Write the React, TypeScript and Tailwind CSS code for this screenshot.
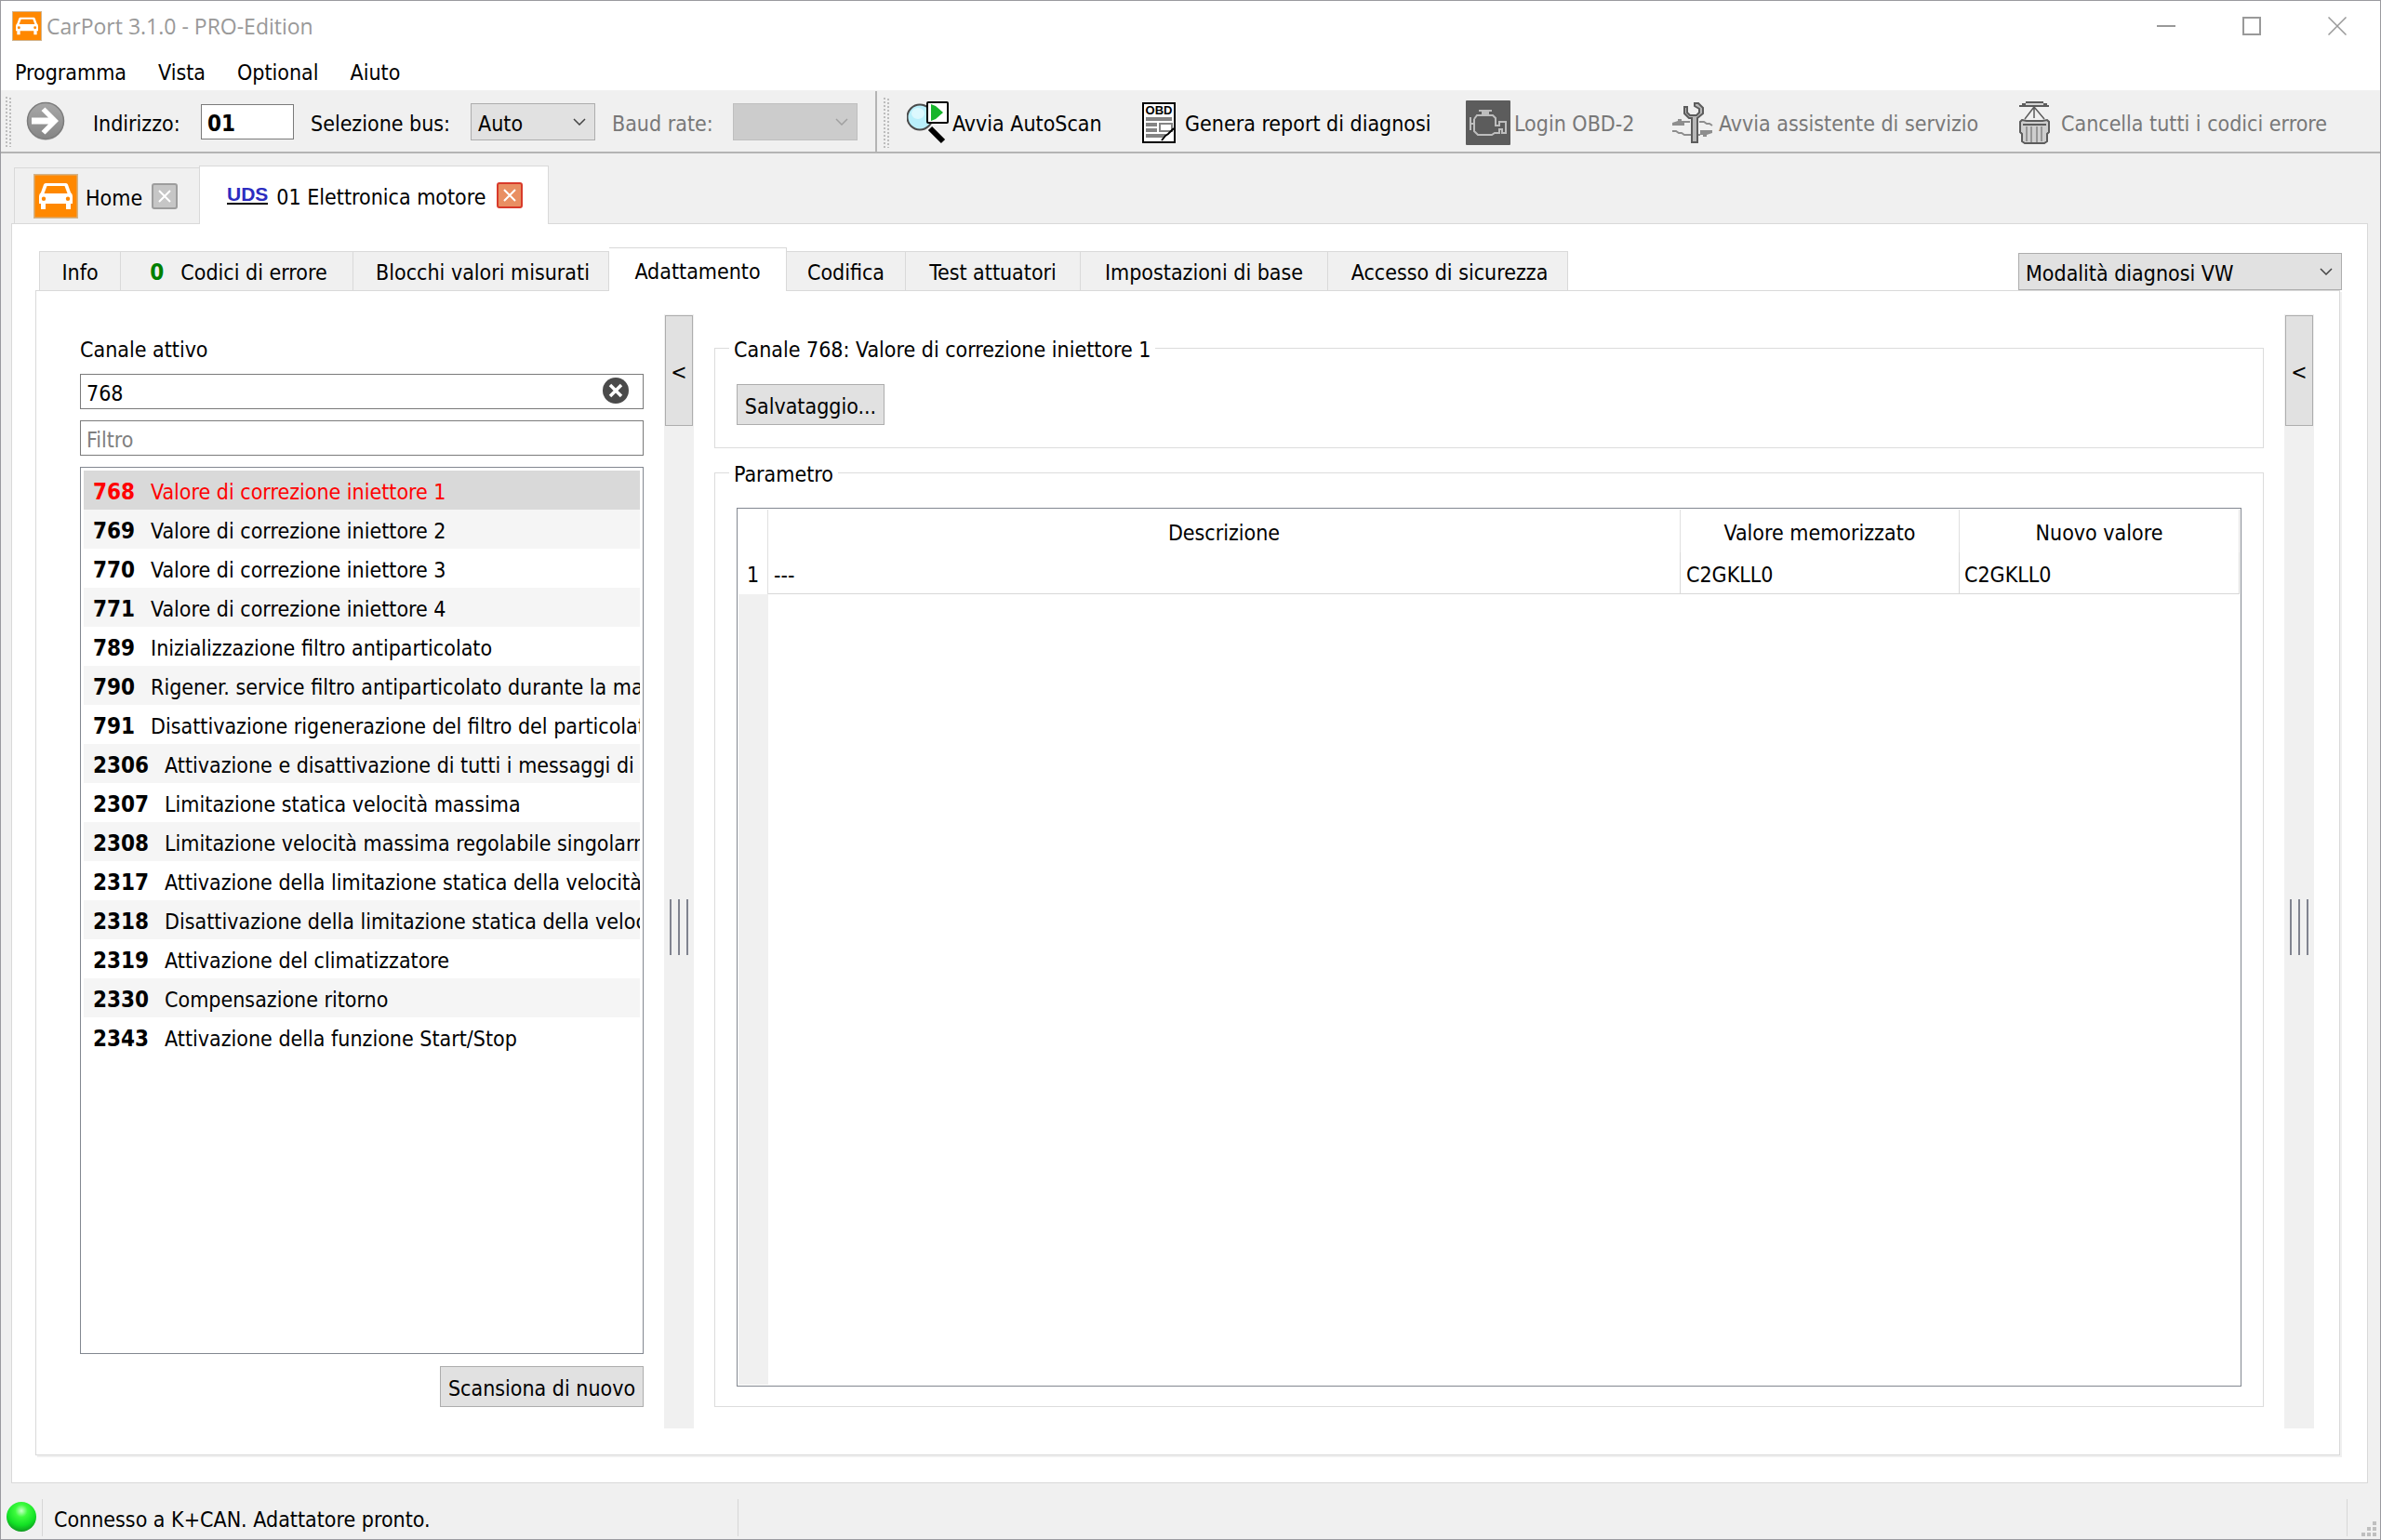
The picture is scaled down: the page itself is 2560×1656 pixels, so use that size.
import { useState, type ReactNode } from "react";

const FONT = "font-['DejaVu_Sans_Condensed','DejaVu_Sans',sans-serif]";

type Channel = { id: string; name: string };

const CHANNELS: Channel[] = [
  { id: "768", name: "Valore di correzione iniettore 1" },
  { id: "769", name: "Valore di correzione iniettore 2" },
  { id: "770", name: "Valore di correzione iniettore 3" },
  { id: "771", name: "Valore di correzione iniettore 4" },
  { id: "789", name: "Inizializzazione filtro antiparticolato" },
  { id: "790", name: "Rigener. service filtro antiparticolato durante la marcia" },
  { id: "791", name: "Disattivazione rigenerazione del filtro del particolato" },
  { id: "2306", name: "Attivazione e disattivazione di tutti i messaggi di errore" },
  { id: "2307", name: "Limitazione statica velocità massima" },
  { id: "2308", name: "Limitazione velocità massima regolabile singolarmente" },
  { id: "2317", name: "Attivazione della limitazione statica della velocità" },
  { id: "2318", name: "Disattivazione della limitazione statica della velocità" },
  { id: "2319", name: "Attivazione del climatizzatore" },
  { id: "2330", name: "Compensazione ritorno" },
  { id: "2343", name: "Attivazione della funzione Start/Stop" },
];

function CarIcon({ className }: { className: string }) {
  return (
    <svg viewBox="0 0 48 48" className={className} aria-hidden="true">
      <rect x="0.75" y="0.75" width="46.5" height="46.5" fill="#ff8800" stroke="#d2b48c" strokeWidth="1.5" />
      <path
        fill="#fff"
        fillRule="evenodd"
        d="M13 10H35Q36.500 10 37 11.500L40 20Q42 21.500 42 24V32H40V38H35V32H13V38H8V32H6V24Q6 21.500 8 20L11 11.500Q11.500 10 13 10ZM14.500 13L11.500 21H36.500L33.500 13ZM11 24.500A2.200 2.200 0 1 0 11 28.900A2.200 2.200 0 1 0 11 24.500ZM37 24.500A2.200 2.200 0 1 0 37 28.900A2.200 2.200 0 1 0 37 24.500Z"
      />
    </svg>
  );
}

function ArrowIcon() {
  return (
    <svg viewBox="0 0 42 44" className="h-[44px] w-[42px]" aria-hidden="true">
      <defs>
        <linearGradient id="arrowFill" x1="0" y1="0" x2="0" y2="1">
          <stop offset="0" stopColor="#a8a8a8" />
          <stop offset="1" stopColor="#858585" />
        </linearGradient>
      </defs>
      <circle cx="21" cy="22.500" r="19.500" fill="#cfcfcf" />
      <circle cx="21" cy="21" r="19.500" fill="url(#arrowFill)" stroke="#7c7c7c" strokeWidth="1.500" />
      <path d="M6 17.500H24L16.500 10L20.500 6.500L35 21L20.500 35.500L16.500 32L24 24.500H6Z" fill="#fff" />
    </svg>
  );
}

function AutoScanIcon() {
  return (
    <svg viewBox="0 0 46 46" className="h-[46px] w-[46px]" aria-hidden="true">
      <path d="M25 29L39 43" stroke="#000" strokeWidth="6" />
      <circle cx="14" cy="17" r="13.500" fill="#b9effb" stroke="#4a4a4a" strokeWidth="2" />
      <ellipse cx="12" cy="13" rx="7" ry="6" fill="#dcf8fe" />
      <rect x="22" y="1" width="22" height="22" rx="1" fill="#fff" stroke="#000" strokeWidth="2" />
      <path d="M26 3L31 5L39 12L31 19L26 21Z" fill="#17b52b" />
    </svg>
  );
}

function ReportIcon() {
  return (
    <svg viewBox="0 0 36 44" className="h-[44px] w-[36px]" aria-hidden="true">
      <rect x="1" y="1" width="34" height="42" fill="#fff" stroke="#000" strokeWidth="2" />
      <text x="18" y="13" textAnchor="middle" fontFamily="Liberation Sans" fontWeight="700" fontSize="13" fill="#000">
        OBD
      </text>
      <path d="M4 16H32V20H4ZM4 22H16V26H4ZM4 28H16V32H4ZM4 34H26L22 38H4Z" fill="#848484" />
      <rect x="19" y="23" width="13" height="8" fill="#fff" stroke="#848484" strokeWidth="2" />
      <path d="M34 28L28 34L25 36L21 41" fill="none" stroke="#000" strokeWidth="2" />
    </svg>
  );
}

function EngineIcon() {
  return (
    <svg viewBox="0 0 48 48" className="h-[48px] w-[48px]" aria-hidden="true">
      <rect width="48" height="48" rx="1" fill="#5c5c5c" />
      <path
        d="M14 11H28M5 18V32M5 25H9M9 20L12 16H29L32 19V27H36V23H43V35H39V31H36V35H31L28 37H13L9 33V20"
        fill="none"
        stroke="#bdbdbd"
        strokeWidth="2"
      />
      <path d="M17 11H25V15H17Z" fill="#bdbdbd" />
    </svg>
  );
}

function ServiceIcon() {
  return (
    <svg viewBox="0 0 46 44" className="h-[44px] w-[46px]" aria-hidden="true">
      <path
        d="M12 21H20M30 21H35L38 23H41L44 25M1 31H5L8 33H11L14 35H31"
        fill="none"
        stroke="#8e8e8e"
        strokeWidth="2"
      />
      <path d="M1 22L7 20V18H11V20H14V25H1ZM44 30V33L38 35V37H34V35H31V30Z" fill="#8e8e8e" />
      <path
        d="M14 5H17V11L20 14H27L30 11V7L25 4V1H29L34 6V12L28 17V43H22V17H19L14 12Z"
        fill="#b8b8b8"
        stroke="#5c5c5c"
        strokeWidth="2"
      />
    </svg>
  );
}

function TrashIcon() {
  return (
    <svg viewBox="0 0 34 46" className="h-[46px] w-[34px]" aria-hidden="true">
      <path d="M7 1H26L30 5H3Z" fill="#d6d6d6" />
      <path d="M7 1H26M3 3H7M26 3H30M0 5H32" fill="none" stroke="#5c5c5c" strokeWidth="2" />
      <path d="M16 6L6 19M16 6L27 19M16 6V18" fill="none" stroke="#5c5c5c" strokeWidth="1.500" />
      <path d="M3 20L8 21H25L30 20L32 22V33L30 35V43L27 45H6L3 43V35L1 33V22Z" fill="#cecece" stroke="#5c5c5c" strokeWidth="2" />
      <path d="M4 25H29" stroke="#5c5c5c" strokeWidth="2" />
      <path d="M8 27V43M13 27V44M19 27V44M24 27V43" stroke="#969696" strokeWidth="2" />
    </svg>
  );
}

function Chevron({ color }: { color: string }) {
  return (
    <svg viewBox="0 0 14 8" className="pointer-events-none absolute top-[16px] right-[10px] h-[8px] w-[14px]" aria-hidden="true">
      <path d="M1 1L7 7L13 1" fill="none" stroke={color} strokeWidth="1.500" />
    </svg>
  );
}

function ToolbarGrip() {
  return (
    <svg viewBox="0 0 6 54" className="h-[54px] w-[6px] shrink-0" aria-hidden="true">
      <path d="M1 0V54M5 1V54" stroke="#bdbdbd" strokeWidth="2" strokeDasharray="2 2" />
    </svg>
  );
}

function ToolButton({
  icon,
  label,
  className,
  disabled = false,
}: {
  icon: ReactNode;
  label: string;
  className: string;
  disabled?: boolean;
}) {
  return (
    <button type="button" disabled={disabled} className={`flex shrink-0 items-center whitespace-nowrap disabled:text-[#787878] ${className}`}>
      {icon}
      <span className="pt-[3px]">{label}</span>
    </button>
  );
}

function InnerTab({ label, className, count }: { label: string; className: string; count?: string }) {
  return (
    <button
      type="button"
      role="tab"
      aria-selected="false"
      className={`flex h-[42px] shrink-0 items-center justify-center whitespace-nowrap border-t border-r border-[#d9d9d9] bg-[#f0f0f0] pt-[3px] ${className}`}
    >
      {count && <b className="mr-[18px] text-[24px] text-[#008000]">{count}</b>}
      {label}
    </button>
  );
}

function Splitter({ label }: { label: string }) {
  return (
    <div className="flex w-8 shrink-0 flex-col items-center bg-[#f0f0f0]">
      <button type="button" aria-label={label} className="mt-px h-[119px] w-[30px] border border-[#adadad] bg-[#e1e1e1] pt-[3px]">
        &lt;
      </button>
      <div className="flex flex-1 items-center gap-[7px]">
        <span className="h-[60px] w-[2px] bg-[#80838f]" />
        <span className="h-[60px] w-[2px] bg-[#80838f]" />
        <span className="h-[60px] w-[2px] bg-[#80838f]" />
      </div>
    </div>
  );
}

function TitleBar() {
  return (
    <header className="flex h-[54px] items-center bg-white pl-3">
      <CarIcon className="h-[32px] w-[32px]" />
      <h1 className="ml-[5px] flex-1 font-['Open_Sans',sans-serif] text-[23px] text-[#999999]">CarPort 3.1.0 - PRO-Edition</h1>
      <div className="flex h-full text-[#999999]">
        <button type="button" aria-label="Riduci a icona" className="grid w-[92px] place-items-center">
          <svg viewBox="0 0 20 20" className="size-5">
            <path d="M0 10H20" stroke="currentColor" strokeWidth="2" />
          </svg>
        </button>
        <button type="button" aria-label="Ingrandisci" className="grid w-[92px] place-items-center">
          <svg viewBox="0 0 20 20" className="size-5">
            <rect x="1" y="1" width="18" height="18" fill="none" stroke="currentColor" strokeWidth="2" />
          </svg>
        </button>
        <button type="button" aria-label="Chiudi" className="grid w-[92px] place-items-center">
          <svg viewBox="0 0 20 20" className="size-5">
            <path d="M0.500 0.500L19.500 19.500M19.500 0.500L0.500 19.500" stroke="currentColor" strokeWidth="1.500" />
          </svg>
        </button>
      </div>
    </header>
  );
}

function Toolbar() {
  const [address, setAddress] = useState("01");
  return (
    <div className="flex h-[67px] border-b-2 border-[#b4b4b4]">
      <div className="flex w-[942px] shrink-0 items-center border-r-2 border-[#b4b4b4] pl-[5px]">
        <ToolbarGrip />
        <button type="button" aria-label="Connetti" className="ml-[16px]">
          <ArrowIcon />
        </button>
        <label htmlFor="address" className="ml-[30px] w-[116px] pt-[4px]">
          Indirizzo:
        </label>
        <input
          id="address"
          value={address}
          onChange={(e) => setAddress(e.target.value)}
          className="h-[38px] w-[100px] border border-[#7a7a7a] bg-white px-[6px] pt-[4px] text-[24px] font-bold outline-none"
        />
        <label htmlFor="bus" className="ml-[18px] w-[172px] pt-[4px]">
          Selezione bus:
        </label>
        <div className="relative">
          <select id="bus" className="h-[40px] w-[134px] appearance-none border border-[#adadad] bg-[#e1e1e1] pt-[4px] pl-[7px]">
            <option>Auto</option>
          </select>
          <Chevron color="#444" />
        </div>
        <label htmlFor="baud" className="ml-[18px] w-[130px] pt-[4px] text-[#787878]">
          Baud rate:
        </label>
        <div className="relative">
          <select id="baud" disabled className="h-[40px] w-[134px] appearance-none border border-[#bfbfbf] bg-[#cccccc] opacity-100" />
          <Chevron color="#a0a0a0" />
        </div>
      </div>
      <div className="flex flex-1 items-center pt-[2px] pl-[7px]">
        <ToolbarGrip />
        <ToolButton icon={<AutoScanIcon />} label="Avvia AutoScan" className="ml-[19px] w-[253px] gap-[3px]" />
        <ToolButton icon={<ReportIcon />} label="Genera report di diagnosi" className="w-[348px] gap-[10px]" />
        <ToolButton icon={<EngineIcon />} label="Login OBD-2" className="w-[221px] gap-[4px]" disabled />
        <ToolButton icon={<ServiceIcon />} label="Avvia assistente di servizio" className="w-[374px] gap-[5px]" disabled />
        <ToolButton icon={<TrashIcon />} label="Cancella tutti i codici errore" className="gap-[11px]" disabled />
      </div>
    </div>
  );
}

function CloseGlyph() {
  return (
    <svg viewBox="0 0 16 16" className="size-4" aria-hidden="true">
      <path d="M2 2L14 14M14 2L2 14" stroke="#fff" strokeWidth="2" />
    </svg>
  );
}

function SessionTabs() {
  return (
    <div role="tablist" className="flex h-[75px] items-end pl-[3px]">
      <div className="flex h-[60px] w-[199px] items-center border-t border-l border-[#d9d9d9] pl-[20px]">
        <button type="button" role="tab" aria-selected="false" className="flex items-center gap-[8px]">
          <CarIcon className="h-[48px] w-[48px]" />
          <span className="pt-[4px]">Home</span>
        </button>
        <button
          type="button"
          aria-label="Chiudi Home"
          className="ml-[10px] grid size-[28px] place-items-center rounded-[3px] border-2 border-[#9d9d9d] bg-[#c6c6c6]"
        >
          <CloseGlyph />
        </button>
      </div>
      <div className="relative -mb-px flex h-[63px] w-[376px] items-center border-x border-t border-[#d9d9d9] bg-white pl-[29px]">
        <button type="button" role="tab" aria-selected="true" className="flex items-center gap-[9px]">
          <b className="border-b-2 border-black font-['Liberation_Sans',sans-serif] text-[21px] leading-[18px] text-[#2c2cc0]">UDS</b>
          <span className="pt-[3px]">01 Elettronica motore</span>
        </button>
        <button
          type="button"
          aria-label="Chiudi 01 Elettronica motore"
          className="ml-[12px] grid size-[28px] place-items-center rounded-[3px] border-2 border-[#d83a2a] bg-[#e98f62]"
        >
          <CloseGlyph />
        </button>
      </div>
    </div>
  );
}

function ChannelPanel() {
  const [channel, setChannel] = useState("768");
  const [filter, setFilter] = useState("");
  const selected = "768";
  const rows = CHANNELS.filter((c) => `${c.id} ${c.name}`.toLowerCase().includes(filter.toLowerCase()));
  return (
    <section className="mr-[22px] flex w-[606px] shrink-0 flex-col pt-6 pb-[23px]">
      <label htmlFor="channel">Canale attivo</label>
      <div className="relative mt-3">
        <input
          id="channel"
          value={channel}
          onChange={(e) => setChannel(e.target.value)}
          className="h-[38px] w-full border border-[#7a7a7a] px-[6px] pt-[4px] outline-none"
        />
        <button type="button" aria-label="Cancella" onClick={() => setChannel("")} className="absolute top-[4px] right-[16px]">
          <svg viewBox="0 0 28 28" className="size-7" aria-hidden="true">
            <circle cx="14" cy="14" r="14" fill="#4a4a4a" />
            <path d="M8 8L20 20M20 8L8 20" stroke="#fff" strokeWidth="3.500" />
          </svg>
        </button>
      </div>
      <input
        aria-label="Filtro"
        placeholder="Filtro"
        value={filter}
        onChange={(e) => setFilter(e.target.value)}
        className="mt-3 h-[38px] w-full border border-[#7a7a7a] px-[6px] pt-[4px] outline-none placeholder:text-[#808080]"
      />
      <ul className="mt-3 flex-1 overflow-hidden border border-[#828790] p-[3px]">
        {rows.map((c, i) => (
          <li key={c.id} className={c.id === selected ? "bg-[#d9d9d9] text-[#ff0000]" : i % 2 === 1 ? "bg-[#f5f5f5]" : "bg-white"}>
            <button
              type="button"
              onClick={() => setChannel(c.id)}
              className="flex h-[42px] w-full items-center gap-[17px] overflow-hidden pt-[3px] pl-[10px] text-left whitespace-nowrap"
            >
              <b className="text-[24px]">{c.id}</b>
              <span>{c.name}</span>
            </button>
          </li>
        ))}
      </ul>
      <button type="button" className="mt-[13px] h-[44px] w-[219px] self-end whitespace-nowrap border border-[#adadad] bg-[#e1e1e1] pt-[3px]">
        Scansiona di nuovo
      </button>
    </section>
  );
}

function AdaptationPanel() {
  return (
    <section className="mx-[22px] flex min-w-0 flex-1 flex-col pt-[20px] pb-[23px]">
      <fieldset className="border border-[#dcdcdc] px-[23px] pt-[23px] pb-6">
        <legend className="-ml-2 px-[5px] pt-1">Canale 768: Valore di correzione iniettore 1</legend>
        <button type="button" className="block h-[44px] w-[159px] border border-[#adadad] bg-[#e1e1e1] pt-[3px]">
          Salvataggio...
        </button>
      </fieldset>
      <fieldset className="mt-[10px] flex min-w-0 flex-1 flex-col border border-[#dcdcdc] px-[23px] pt-[22px] pb-[21px]">
        <legend className="-ml-2 px-[5px] pt-1">Parametro</legend>
        <div className="flex flex-1 flex-col border border-[#828790] p-px">
          <table className="w-full table-fixed border-separate border-spacing-0">
            <colgroup>
              <col className="w-[32px]" />
              <col />
              <col className="w-[300px]" />
              <col className="w-[301px]" />
            </colgroup>
            <thead>
              <tr className="h-[46px]">
                <td className="border-r border-[#e0e0e0]" />
                <th scope="col" className="border-r border-[#e0e0e0] pt-[3px] font-normal">
                  Descrizione
                </th>
                <th scope="col" className="border-r border-[#e0e0e0] pt-[3px] font-normal">
                  Valore memorizzato
                </th>
                <th scope="col" className="border-r border-[#e0e0e0] pt-[3px] font-normal">
                  Nuovo valore
                </th>
              </tr>
            </thead>
            <tbody>
              <tr className="h-[45px]">
                <th scope="row" className="border-r border-[#e0e0e0] pt-[3px] font-normal">
                  1
                </th>
                <td className="border-r border-b border-[#d8d8d8] pt-[3px] pl-[6px]">---</td>
                <td className="border-r border-b border-[#d8d8d8] pt-[3px] pl-[6px]">C2GKLL0</td>
                <td className="border-r border-b border-[#d8d8d8] pt-[3px] pl-[5px]">C2GKLL0</td>
              </tr>
            </tbody>
          </table>
          <div className="w-[32px] flex-1 bg-[#f0f0f0]" />
        </div>
      </fieldset>
    </section>
  );
}

export default function App() {
  return (
    <div className={`flex min-h-screen flex-col border border-[#9a9a9f] bg-[#f0f0f0] text-[23px] leading-[28px] text-black ${FONT}`}>
      <TitleBar />
      <nav className="flex h-[43px] items-center gap-[34px] border-b border-[#f0f0f0] bg-white pt-[3px] pl-[15px]">
        <button type="button">Programma</button>
        <button type="button">Vista</button>
        <button type="button">Optional</button>
        <button type="button">Aiuto</button>
      </nav>
      <Toolbar />
      <main className="mr-[13px] ml-[11px] flex flex-1 flex-col">
        <SessionTabs />
        <div className="flex flex-1 flex-col border border-[#d9d9d9] bg-white pr-[29px] pb-[29px] pl-[25px]">
          <div className="mt-[25px] flex h-[46px] items-end justify-between">
            <div role="tablist" className="ml-[4px] flex items-end">
              <InnerTab label="Info" className="w-[88px] border-l" />
              <InnerTab label="Codici di errore" count="0" className="w-[250px] pl-1" />
              <InnerTab label="Blocchi valori misurati" className="w-[275px] pl-1" />
              <button
                type="button"
                role="tab"
                aria-selected="true"
                className="relative -mb-px h-[47px] w-[191px] border-t border-r border-[#d9d9d9] bg-white pt-[3px]"
              >
                Adattamento
              </button>
              <InnerTab label="Codifica" className="w-[128px]" />
              <InnerTab label="Test attuatori" className="w-[188px]" />
              <InnerTab label="Impostazioni di base" className="w-[266px]" />
              <InnerTab label="Accesso di sicurezza" className="w-[258px] pl-1" />
            </div>
            <div className="relative -mr-[2px]">
              <select
                aria-label="Modalità diagnosi"
                className="block h-[40px] w-[348px] appearance-none border border-[#adadad] bg-[#e1e1e1] pt-[3px] pl-[7px]"
              >
                <option>Modalità diagnosi VW</option>
              </select>
              <Chevron color="#444" />
            </div>
          </div>
          <div className="flex flex-1 border border-[#d9d9d9] pt-[25px] pr-[27px] pb-[28px] pl-[47px] shadow-[2px_2px_0_#f0f0f0]">
            <ChannelPanel />
            <Splitter label="Comprimi elenco canali" />
            <AdaptationPanel />
            <Splitter label="Espandi pannello laterale" />
          </div>
        </div>
      </main>
      <footer className="flex h-[60px] pt-[17px] pb-[3px]">
        <div className="grid w-[45px] justify-center border-r border-[#d7d7d7]">
          <svg viewBox="0 0 34 34" className="mt-[2px] h-[34px] w-[34px]" role="img" aria-label="Connesso">
            <defs>
              <radialGradient id="led" cx="0.5" cy="0.3" r="0.7">
                <stop offset="0" stopColor="#c8ffc8" />
                <stop offset="0.3" stopColor="#3dfc3d" />
                <stop offset="0.7" stopColor="#12e025" />
                <stop offset="1" stopColor="#109a20" />
              </radialGradient>
            </defs>
            <circle cx="17" cy="17" r="16" fill="url(#led)" />
          </svg>
        </div>
        <p className="flex w-[748px] items-center border-r border-[#d7d7d7] pt-[3px] pl-3">Connesso a K+CAN. Adattatore pronto.</p>
        <div className="flex-1 border-r border-[#d7d7d7]" />
        <div className="flex w-[35px] items-end justify-end pr-[4px]">
          <svg viewBox="0 0 16 16" className="size-4" aria-hidden="true">
            <path d="M12 0h4v4h-4zM6 6h4v4H6zM12 6h4v4h-4zM0 12h4v4H0zM6 12h4v4H6zM12 12h4v4h-4z" fill="#bfbfbf" />
          </svg>
        </div>
      </footer>
    </div>
  );
}
